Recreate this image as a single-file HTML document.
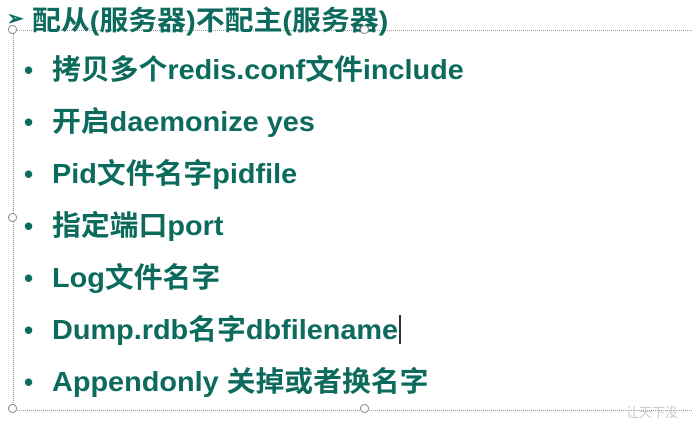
<!DOCTYPE html>
<html><head><meta charset="utf-8"><style>
body{margin:0;width:692px;height:425px;background:#fff;overflow:hidden;position:relative;font-family:"Liberation Sans","Noto Sans CJK SC",sans-serif;font-weight:bold;color:#0d6b5d}
.t{position:absolute;white-space:nowrap;transform-origin:0 50%}
.title{left:32px;top:4px;font-size:27px;line-height:34px;transform:scaleX(1.07)}
.it{left:52px;font-size:28px;line-height:34px;transform:scaleX(1.03)}
.b{position:absolute;left:24px;font-size:26px;line-height:34px}
.c{position:absolute;width:9px;height:9px;border:1.3px solid #888;border-radius:50%;background:#fff;box-sizing:border-box}
</style></head><body>
<div style="position:absolute;left:13px;top:30px;width:700px;height:379px;border-top:1.3px dotted #999;border-left:1.3px dotted #999;border-bottom:1.3px dotted #999"></div>
<div class="t" style="left:7px;top:6px;font-size:20px;color:#0d6b5d">➢</div>
<div class="t title">配从(服务器)不配主(服务器)</div>
<div class="c" style="left:8px;top:25px"></div>
<div class="c" style="left:360px;top:25px"></div>
<div class="c" style="left:8px;top:213px"></div>
<div class="c" style="left:8px;top:404px"></div>
<div class="c" style="left:360px;top:404px"></div>
<div class="b" style="top:53px">•</div><div class="t it" style="top:53px">拷贝多个redis.conf文件include</div>
<div class="b" style="top:105px">•</div><div class="t it" style="top:105px">开启daemonize yes</div>
<div class="b" style="top:157px">•</div><div class="t it" style="top:157px">Pid文件名字pidfile</div>
<div class="b" style="top:209px">•</div><div class="t it" style="top:209px">指定端口port</div>
<div class="b" style="top:261px">•</div><div class="t it" style="top:261px">Log文件名字</div>
<div class="b" style="top:313px">•</div><div class="t it" style="top:313px">Dump.rdb名字dbfilename</div>
<div style="position:absolute;left:399px;top:315px;width:1.5px;height:29px;background:#333"></div>
<div class="b" style="top:365px">•</div><div class="t it" style="top:365px">Appendonly 关掉或者换名字</div>
<div class="t" style="left:626px;top:402px;font-size:13px;color:#ccc;font-weight:normal">让天下没</div>
</body></html>
